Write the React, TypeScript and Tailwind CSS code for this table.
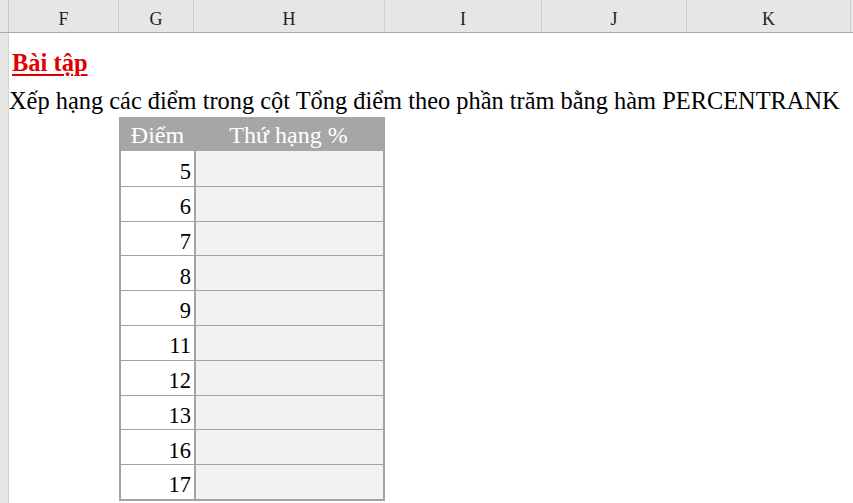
import React from 'react';

const columns = [
  { label: 'F', w: 'w-[110px]' },
  { label: 'G', w: 'w-[75px]' },
  { label: 'H', w: 'w-[191px]' },
  { label: 'I', w: 'w-[157px]' },
  { label: 'J', w: 'w-[145px]' },
  { label: 'K', w: 'w-[164px]' },
];

const scores = [5, 6, 7, 8, 9, 11, 12, 13, 16, 17];

export default function App() {
  return (
    <div className="w-[853px] h-[503px] overflow-hidden bg-white font-['Liberation_Serif',serif] text-black">
      {/* column header bar */}
      <div className="flex h-[33px] bg-[#e6e6e6] border-b border-[#a9a9a9]">
        <div className="w-[9px] shrink-0 border-r border-[#c8c8c8]" />
        {columns.map((c) => (
          <div
            key={c.label}
            className={`${c.w} shrink-0 flex items-center justify-center pt-[6px] text-[18px] text-[#222] border-r border-[#cfcfcf]`}
          >
            {c.label}
          </div>
        ))}
      </div>

      <div className="flex h-[470px]">
        <div className="w-[9px] shrink-0 bg-[#e6e6e6] border-r border-[#d4d4d4]" />
        <div className="flex-1 flex flex-col">
          <div className="h-[14px]" />
          <div className="h-[35px] flex items-end pl-[3px] pb-[7px]">
            <span className="text-[24.5px] font-bold text-[#e00000] underline decoration-[2px] underline-offset-[3px] leading-none">
              Bài tập
            </span>
          </div>
          <div className="h-[35px] flex items-end pb-[4px]">
            <span className="text-[24.4px] leading-none whitespace-nowrap">
              Xếp hạng các điểm trong cột Tổng điểm theo phần trăm bằng hàm PERCENTRANK
            </span>
          </div>

          {/* table */}
          <div className="ml-[110px] w-[266px] border-l-2 border-r-2 border-b-2 border-[#a3a3a3]">
            <div className="flex h-[34px] bg-[#a6a6a6] text-white text-[24px]">
              <div className="w-[73px] flex items-end justify-center pb-[4px] leading-none">Điểm</div>
              <div className="flex-1 flex items-end justify-center pb-[4px] leading-none">Thứ hạng %</div>
            </div>
            {scores.map((s, i) => (
              <div
                key={s}
                className={`flex h-[34.8px] text-[22.5px] ${i > 0 ? 'border-t border-[#a3a3a3]' : ''}`}
              >
                <div className="w-[73px] flex items-end justify-end pr-[3px] pb-[2px] leading-none bg-white">
                  {s}
                </div>
                <div className="flex-1 bg-[#f2f2f2] border-l-2 border-[#a3a3a3]" />
              </div>
            ))}
          </div>
        </div>
      </div>
    </div>
  );
}
